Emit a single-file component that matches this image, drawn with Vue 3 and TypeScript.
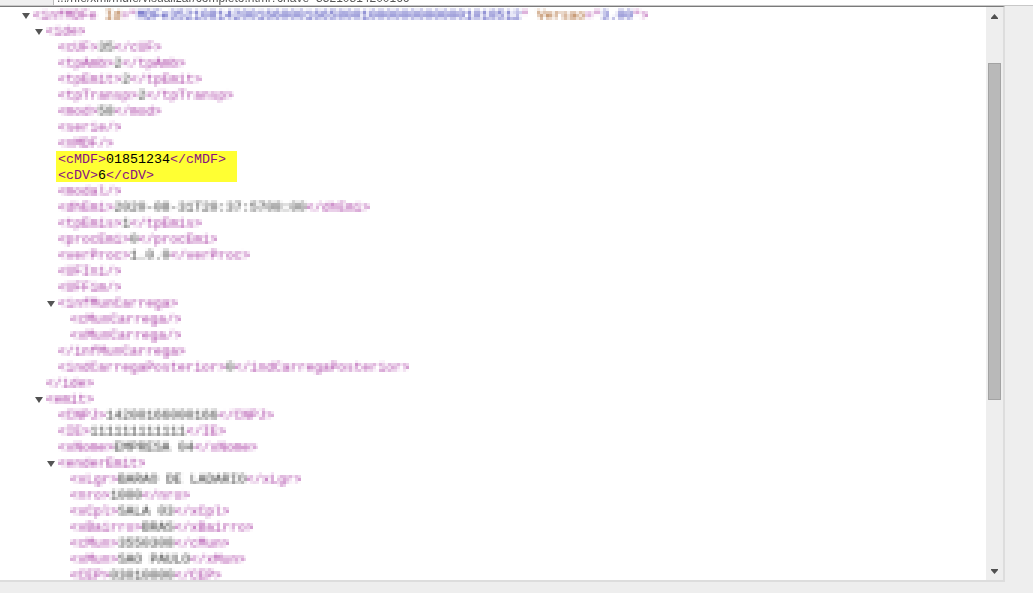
<script setup lang="ts">
type Part = { c: string; t: string }
type Row = { d: number; arrow?: boolean; crisp?: boolean; tag?: string; val?: string; raw?: string }

const rowsA: Row[] = [
  { d: 1, arrow: true, raw: '<ide>' },
  { d: 2, tag: 'cUF', val: '35' },
  { d: 2, tag: 'tpAmb', val: '2' },
  { d: 2, tag: 'tpEmit', val: '2' },
  { d: 2, tag: 'tpTransp', val: '2' },
  { d: 2, tag: 'mod', val: '58' },
  { d: 2, raw: '<serie/>' },
  { d: 2, raw: '<nMDF/>' },
]
const rowsHighlight: Row[] = [
  { d: 0, tag: 'cMDF', val: '01851234' },
  { d: 0, tag: 'cDV', val: '6' },
]
const rowsB: Row[] = [
  { d: 2, raw: '<modal/>' },
  { d: 2, tag: 'dhEmi', val: '2020-08-31T20:37:5708:00' },
  { d: 2, tag: 'tpEmis', val: '1' },
  { d: 2, tag: 'procEmi', val: '0' },
  { d: 2, tag: 'verProc', val: '1.0.0' },
  { d: 2, raw: '<UFIni/>' },
  { d: 2, raw: '<UFFim/>' },
  { d: 2, arrow: true, raw: '<infMunCarrega>' },
  { d: 3, raw: '<cMunCarrega/>' },
  { d: 3, raw: '<xMunCarrega/>' },
  { d: 2, raw: '</infMunCarrega>' },
  { d: 2, tag: 'indCarregaPosterior', val: '0' },
  { d: 1, raw: '</ide>' },
  { d: 1, arrow: true, crisp: true, raw: '<emit>' },
  { d: 2, tag: 'CNPJ', val: '14200166000166' },
  { d: 2, tag: 'IE', val: '111111111111' },
  { d: 2, tag: 'xNome', val: 'EMPRESA 04' },
  { d: 2, arrow: true, raw: '<enderEmit>' },
  { d: 3, tag: 'xLgr', val: 'BARAO DE LADARIO' },
  { d: 3, tag: 'nro', val: '1000' },
  { d: 3, tag: 'xCpl', val: 'SALA 03' },
  { d: 3, tag: 'xBairro', val: 'BRAS' },
  { d: 3, tag: 'cMun', val: '3550308' },
  { d: 3, tag: 'xMun', val: 'SAO PAULO' },
  { d: 3, tag: 'CEP', val: '03010000' },
]

const rootParts: Part[] = [
  { c: 'tag', t: '<infMDFe ' },
  { c: 'attr', t: 'Id' },
  { c: 'tag', t: '="' },
  { c: 'value', t: 'MDFe35210814200166000166580010000000000001018512' },
  { c: 'tag', t: '" ' },
  { c: 'attr', t: 'Versao' },
  { c: 'tag', t: '="' },
  { c: 'value', t: '3.00' },
  { c: 'tag', t: '">' },
]
</script>

<template>
  <div class="page">
    <svg class="defs" width="0" height="0" aria-hidden="true">
      <filter id="lowres" x="0" y="0" width="100%" height="100%" color-interpolation-filters="sRGB">
        <feGaussianBlur in="SourceGraphic" stdDeviation="1" result="soft" />
        <feFlood x="1" y="1" width="1" height="1" flood-color="#000" />
        <feComposite width="3" height="3" />
        <feTile result="grid" />
        <feComposite in="soft" in2="grid" operator="in" />
        <feMorphology operator="dilate" radius="1" />
      </filter>
    </svg>
    <header class="address">
      <div class="address-nav"></div>
      <div class="address-url">.../nfe/xml/mdfe/visualizar/completo.html?chave=35210814200166</div>
    </header>
    <div class="main">
      <section class="frame">
        <div class="source">
          <div class="row depth0">
            <i class="arrow soft-arrow"></i>
            <span class="label"><span v-for="(p, i) in rootParts" :key="i" :class="p.c">{{ p.t }}</span></span>
          </div>
          <div v-for="(r, i) in rowsA" :key="'a' + i" class="row" :class="'depth' + r.d">
            <i v-if="r.arrow" class="arrow" :class="r.crisp ? 'crisp-arrow' : 'soft-arrow'"></i>
            <span v-if="r.raw" class="label"><span class="tag">{{ r.raw }}</span></span>
            <span v-else class="label"><span class="tag">&lt;{{ r.tag }}&gt;</span><span class="text">{{ r.val }}</span><span class="tag">&lt;/{{ r.tag }}&gt;</span></span>
          </div>
          <div class="highlight">
            <div v-for="(r, i) in rowsHighlight" :key="'h' + i" class="row">
              <span class="tag">&lt;{{ r.tag }}&gt;</span><span class="text">{{ r.val }}</span><span class="tag">&lt;/{{ r.tag }}&gt;</span>
            </div>
          </div>
          <div v-for="(r, i) in rowsB" :key="'b' + i" class="row" :class="'depth' + r.d">
            <i v-if="r.arrow" class="arrow" :class="r.crisp ? 'crisp-arrow' : 'soft-arrow'"></i>
            <span v-if="r.raw" class="label"><span class="tag">{{ r.raw }}</span></span>
            <span v-else class="label"><span class="tag">&lt;{{ r.tag }}&gt;</span><span class="text">{{ r.val }}</span><span class="tag">&lt;/{{ r.tag }}&gt;</span></span>
          </div>
        </div>
        <aside class="scrollbar">
          <svg class="scroll-arrow" width="7" height="5" viewBox="0 0 7 5"><path d="M3.5 0 7 4v1H0V4z" fill="#505050" /></svg>
          <div class="track"><div class="thumb"></div></div>
          <svg class="scroll-arrow" width="7" height="5" viewBox="0 0 7 5"><path d="M0 0h7v1L3.5 5 0 1z" fill="#505050" /></svg>
        </aside>
      </section>
    </div>
  </div>
</template>

<style>
html,
body {
  margin: 0;
  background: #eeeeee;
}
</style>

<style scoped>
.page {
  position: relative;
  width: 1033px;
  height: 593px;
  display: flex;
  flex-direction: column;
  overflow: hidden;
  background: #eeeeee;
  font-family: "Liberation Mono", monospace;
}
.defs {
  position: absolute;
}
.address {
  height: 5px;
  flex: none;
  display: flex;
  background: #ffffff;
  overflow: hidden;
}
.address-nav {
  width: 53px;
  background: #efefef;
  border-right: 1px solid #bdbdbd;
}
.address-url {
  padding-left: 3px;
  margin-top: -9px;
  font-family: "Liberation Sans", sans-serif;
  font-size: 12px;
  line-height: 14px;
  color: #555555;
  white-space: nowrap;
  filter: blur(0.5px);
}
.main {
  flex: 1;
  min-height: 0;
  border-top: 1px solid #c8c8c8;
  padding-right: 28px;
}
.frame {
  height: 573px;
  display: flex;
  border-top: 1px solid #7a7a7a;
  border-right: 2px solid #dddddd;
  border-bottom: 2px solid #dddddd;
  background: #ffffff;
  box-sizing: content-box;
}
.source {
  flex: 1;
  min-width: 0;
  overflow: hidden;
  padding-top: 1px;
  font-size: 13.333px;
  line-height: 16px;
}
.row {
  height: 16px;
  white-space: pre;
  display: flex;
  align-items: center;
}
.label {
  display: block;
  height: 16px;
  filter: url(#lowres);
}
.label .tag { color: #a0289a; }
.label .text { color: #2a2a2a; }
.depth0 { padding-left: 33px; }
.depth1 { padding-left: 46px; }
.depth2 { padding-left: 58px; }
.depth3 { padding-left: 70px; }
.arrow {
  flex: none;
  width: 0;
  height: 0;
  margin-left: -11px;
  margin-right: 3px;
  border-left: 4px solid transparent;
  border-right: 4px solid transparent;
  border-top: 6px solid #555555;
}
.soft-arrow {
  filter: blur(0.6px);
}
.crisp-arrow {
  border-top-color: #505050;
}
.tag { color: #881280; }
.attr { color: #994500; }
.value { color: #1a1aa6; }
.text { color: #000000; }
.highlight {
  position: relative;
  z-index: 1;
  box-sizing: border-box;
  width: 181px;
  height: 31px;
  margin-left: 56px;
  margin-top: -1px;
  margin-bottom: 2px;
  padding-left: 2px;
  padding-top: 1px;
  background: #ffff33;
}
.scrollbar {
  width: 17px;
  flex: none;
  display: flex;
  flex-direction: column;
  align-items: center;
  padding: 7px 0 6px;
  box-sizing: border-box;
  background: #eeeeee;
}
.scroll-arrow {
  flex: none;
}
.track {
  flex: 1;
  width: 100%;
  display: flex;
  justify-content: center;
}
.thumb {
  box-sizing: border-box;
  width: 13px;
  height: 337px;
  margin-top: 44px;
  background: #b9b9b9;
  border: 1px solid #a3a3a3;
}
</style>
